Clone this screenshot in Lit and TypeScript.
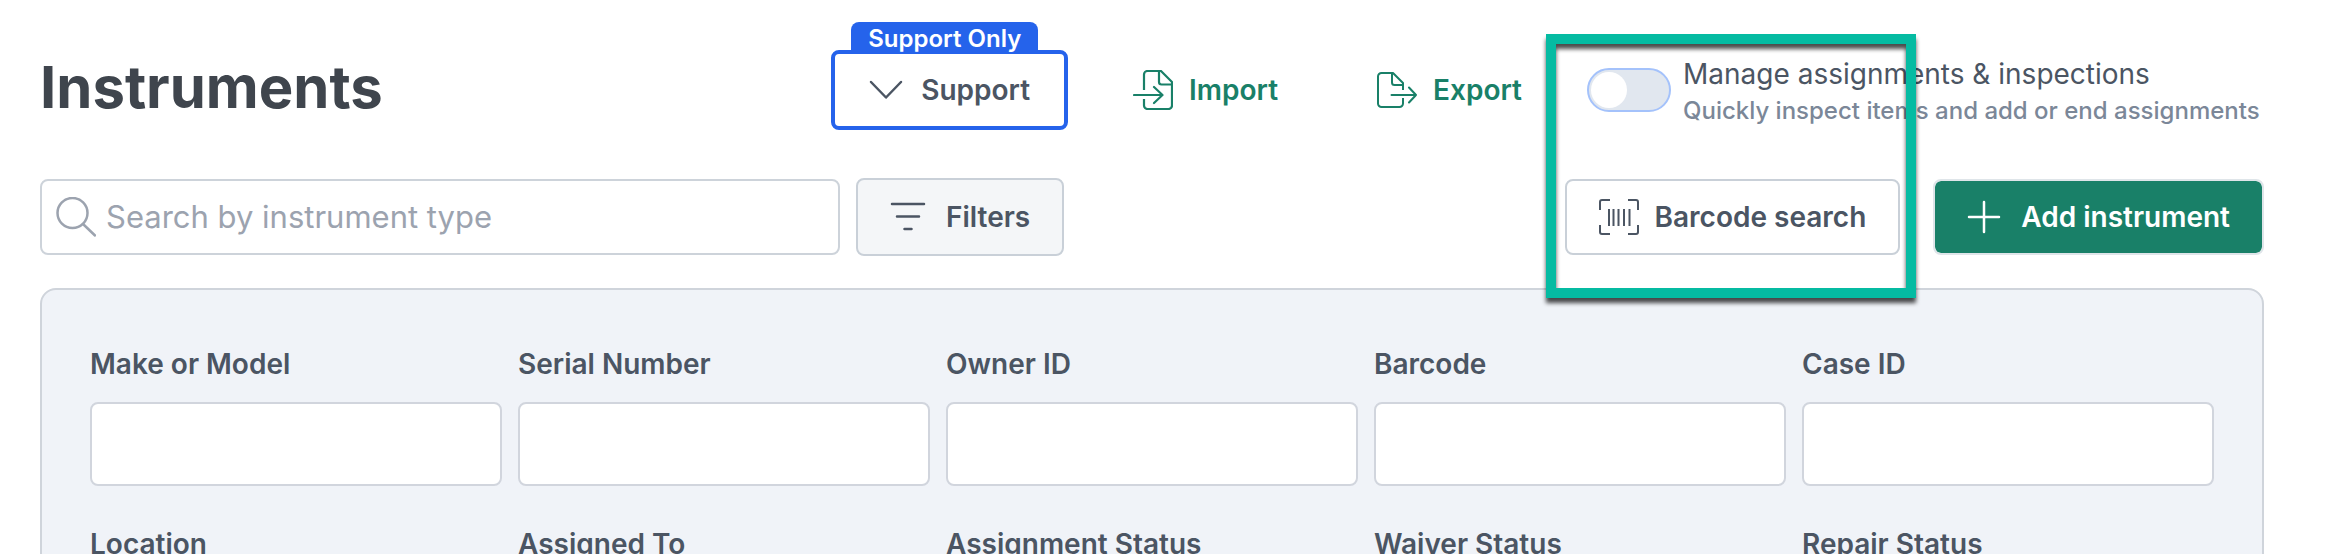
import { LitElement, html, css, svg } from "lit";
import { customElement, state } from "lit/decorators.js";

const icons = {
  search: svg`<svg class="icon" width="40" height="40" viewBox="0 0 40 40" fill="none" stroke="currentColor" stroke-width="2.5" stroke-linecap="round"><circle cx="16.5" cy="16" r="15"/><path d="M27 27l12 11.500"/></svg>`,
  chevron: svg`<svg class="icon" width="34" height="20" viewBox="0 0 34 20" fill="none" stroke="currentColor" stroke-width="2.500" stroke-linecap="round" stroke-linejoin="round"><path d="M2 2l15 15.500L32 2"/></svg>`,
  import: svg`<svg class="icon" width="40" height="40" viewBox="0 0 40 40" fill="none" stroke="currentColor" stroke-width="2.200" stroke-linecap="butt" stroke-linejoin="round"><path d="M11 20V4.500A3.500 3.500 0 0 1 14.500 1H28L39 12v23.500a3.500 3.500 0 0 1-3.500 3.500h-21A3.500 3.500 0 0 1 11 35.500V29"/><path d="M26 1v11a2.500 2.500 0 0 0 2.500 2.500H39"/><path stroke-linecap="round" d="M1 25h28M21 17l8.500 8-8.500 8"/></svg>`,
  export: svg`<svg class="icon" width="40" height="40" viewBox="0 0 40 40" fill="none" stroke="currentColor" stroke-width="2" stroke-linecap="butt" stroke-linejoin="round"><path d="M26 20v-7L16 3H4.500A3.500 3.500 0 0 0 1 6.500v27A3.500 3.500 0 0 0 4.500 37h18a3.500 3.500 0 0 0 3.500-3.500V28"/><path d="M15 3v9.500a2.500 2.500 0 0 0 2.500 2.500H26"/><path stroke-linecap="round" d="M14.500 25H39M32 17.500l7 7.500-7 7.500"/></svg>`,
  filter: svg`<svg class="icon" width="36" height="32" viewBox="0 0 36 32" fill="none" stroke="currentColor" stroke-width="2.500" stroke-linecap="round"><path d="M2 3h32M7 15.500h22M14.500 28h7"/></svg>`,
  barcode: svg`<svg class="icon" width="40" height="36" viewBox="0 0 40 36" fill="none" stroke="currentColor" stroke-width="2" stroke-linecap="butt" stroke-linejoin="round"><path d="M11 1H3a2 2 0 0 0-2 2v8M29 1h8a2 2 0 0 1 2 2v8M11 35H3a2 2 0 0 1-2-2v-7M29 35h8a2 2 0 0 0 2-2v-7"/><path d="M10 10v17M14.500 10v17M19.500 10v17M25 10v17M30.500 10v17"/></svg>`,
  plus: svg`<svg class="icon" width="34" height="34" viewBox="0 0 34 34" fill="none" stroke="currentColor" stroke-width="2.500" stroke-linecap="round"><path d="M17 2v30M2 17h30"/></svg>`,
};

const fields = [
  { id: "make-model", label: "Make or Model" },
  { id: "serial", label: "Serial Number" },
  { id: "owner", label: "Owner ID" },
  { id: "barcode", label: "Barcode" },
  { id: "case", label: "Case ID" },
  { id: "location", label: "Location" },
  { id: "assigned-to", label: "Assigned To" },
  { id: "assignment-status", label: "Assignment Status" },
  { id: "waiver-status", label: "Waiver Status" },
  { id: "repair-status", label: "Repair Status" },
];

@customElement("app-root")
export class AppRoot extends LitElement {
  @state() private managing = false;

  static styles = css`
    :host {
      display: block;
      position: relative;
      box-sizing: border-box;
      height: 100vh;
      overflow: hidden;
      padding: 50px 64px 0 40px;
      background: #fff;
      color: #4b5563;
      font: 400 28px/40px Inter, "Liberation Sans", sans-serif;
    }
    *, *::before { box-sizing: border-box; }
    .icon { display: block; flex: none; }
    .row { display: flex; align-items: center; }
    .header { height: 80px; gap: 31px; }
    .toolbar { height: 78px; gap: 16px; margin-top: 48px; }
    .title {
      margin: 0 auto 0 0;
      padding-bottom: 6px;
      color: #3f454d;
      font-size: 58px;
      line-height: 72px;
      font-weight: 700;
    }
    button {
      display: flex;
      align-items: center;
      gap: 16px;
      height: 76px;
      padding: 0 32px;
      border: 2px solid #c9d0d8;
      border-radius: 8px;
      background: #fff;
      color: inherit;
      font: inherit;
      font-weight: 600;
      white-space: nowrap;
      cursor: pointer;
    }
    .support { position: relative; }
    .support button { height: 80px; gap: 18px; padding: 0 34px; border: 4px solid #2563eb; }
    .tag {
      position: absolute;
      left: 20px;
      bottom: 100%;
      height: 28px;
      padding: 0 17px;
      border-radius: 8px 8px 0 0;
      background: #2563eb;
      color: #fff;
      font-size: 24px;
      line-height: 34px;
      font-weight: 600;
      white-space: nowrap;
    }
    .link { border-color: transparent; background: none; color: #198068; }
    .filters { height: 78px; gap: 20px; background: #f4f6f8; }
    .primary {
      border-color: #dfe5e9;
      background: #198068;
      background-clip: padding-box;
      color: #fff;
      gap: 20px;
    }
    .switch { display: flex; align-items: center; gap: 12px; cursor: pointer; }
    .switch input {
      appearance: none;
      flex: none;
      width: 84px;
      height: 44px;
      margin: 0;
      padding: 2px;
      border: 2px solid #a4c2fb;
      border-radius: 22px;
      background: #e1e7ef;
    }
    .switch input::before {
      content: "";
      display: block;
      width: 36px;
      height: 36px;
      border-radius: 50%;
      background: #fff;
    }
    .switch input:checked { background: #198068; }
    .switch input:checked::before { margin-left: auto; }
    .switch-text {
      display: flex;
      flex-direction: column;
      min-width: 581px;
      white-space: nowrap;
    }
    .switch-title { line-height: 42px; }
    .switch-note { color: #7b8798; font-size: 24px; line-height: 32px; font-weight: 500; }
    .search {
      display: flex;
      align-items: center;
      flex: 0 1 800px;
      gap: 10px;
      height: 76px;
      padding: 0 14px;
      border: 2px solid #cdd3da;
      border-radius: 8px;
      color: #9ca3af;
    }
    .search input {
      flex: 1;
      min-width: 0;
      padding: 0;
      border: 0;
      outline: 0;
      background: none;
      color: #4b5563;
      font: inherit;
      font-size: 31px;
    }
    .search input::placeholder { color: #9ca3af; opacity: 1; }
    .spacer { flex: 1; }
    .add { padding-left: 17px; }
    .panel {
      display: grid;
      grid-template-columns: repeat(5, 1fr);
      gap: 38px 16px;
      margin-top: 32px;
      padding: 54px 48px;
      border: 2px solid #cfd4db;
      border-radius: 16px;
      background: #f0f3f8;
    }
    .field { display: flex; flex-direction: column; gap: 18px; min-width: 0; }
    .field label { font-weight: 600; }
    .field input {
      width: 100%;
      height: 84px;
      padding: 0 24px;
      border: 2px solid #d1d5dd;
      border-radius: 8px;
      background: #fff;
      color: inherit;
      font: inherit;
    }
    .highlight {
      position: absolute;
      top: 34px;
      right: 412px;
      width: 370px;
      height: 264px;
      border: 10px solid #05bba2;
      filter: drop-shadow(0 5px 2px rgba(0, 0, 0, 0.7));
      pointer-events: none;
    }
  `;

  private toggle(e: Event) {
    this.managing = (e.target as HTMLInputElement).checked;
  }

  render() {
    return html`
      <header class="row header">
        <h1 class="title">Instruments</h1>
        <div class="support">
          <span class="tag">Support Only</span>
          <button type="button">${icons.chevron}Support</button>
        </div>
        <button type="button" class="link">${icons.import}Import</button>
        <button type="button" class="link">${icons.export}Export</button>
        <label class="switch">
          <input type="checkbox" role="switch" .checked=${this.managing} @change=${this.toggle} />
          <span class="switch-text">
            <span class="switch-title">Manage assignments &amp; inspections</span>
            <span class="switch-note">Quickly inspect items and add or end assignments</span>
          </span>
        </label>
      </header>
      <div class="row toolbar">
        <label class="search">
          ${icons.search}
          <input type="text" placeholder="Search by instrument type" aria-label="Search by instrument type" />
        </label>
        <button type="button" class="filters">${icons.filter}Filters</button>
        <span class="spacer"></span>
        <button type="button">${icons.barcode}Barcode search</button>
        <div class="add"><button type="button" class="primary">${icons.plus}Add instrument</button></div>
      </div>
      <section class="panel">
        ${fields.map(
          (f) => html`<div class="field">
            <label for=${f.id}>${f.label}</label>
            <input id=${f.id} type="text" />
          </div>`
        )}
      </section>
      <div class="highlight"></div>
    `;
  }
}
